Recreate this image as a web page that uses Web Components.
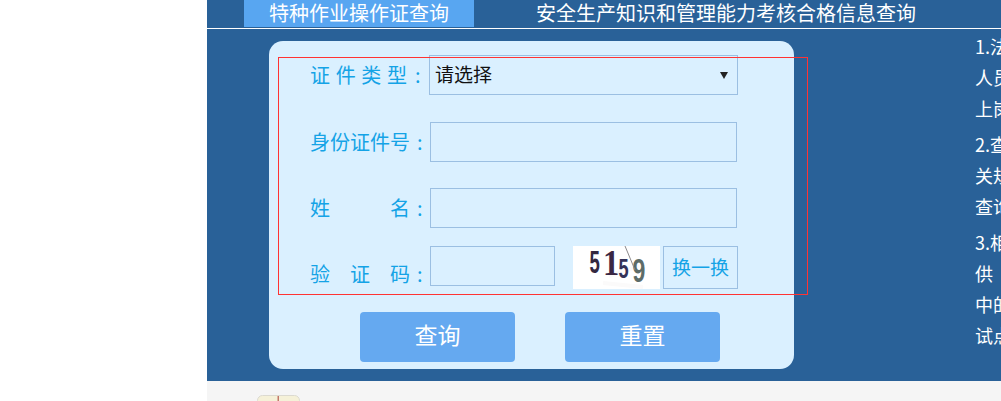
<!DOCTYPE html>
<html lang="zh">
<head>
<meta charset="utf-8">
<title>证书查询</title>
<style>
html,body{margin:0;padding:0;background:#fff;height:401px;overflow:hidden}
body{font-family:"Noto Sans CJK SC","Noto Sans",sans-serif;display:flex;flex-direction:column;padding-left:207px;box-sizing:border-box}
</style>
</head>
<body>
<nav-tabs>
  <tab-item active>特种作业操作证查询</tab-item>
  <tab-item>安全生产知识和管理能力考核合格信息查询</tab-item>
</nav-tabs>
<query-panel>
  <query-form>
    <form-row label="证件类型" label-width="97" colon-gap="8" gap="27"><select-box>请选择</select-box></form-row>
    <form-row label="身份证件号" gap="26"><text-field width="307"></text-field></form-row>
    <form-row label="姓名" gap="18"><text-field width="307"></text-field></form-row>
    <form-row label="验证码" align="end" gap="23">
      <text-field width="125"></text-field>
      <captcha-image></captcha-image>
      <swap-button>换一换</swap-button>
    </form-row>
    <form-actions>
      <action-button>查询</action-button>
      <action-button>重置</action-button>
    </form-actions>
  </query-form>
  <note-column>
    <p>1.法<br>人员<br>上岗</p>
    <p>2.查<br>关规<br>查询</p>
    <p>3.相<br>供<br>中的<br>试点</p>
  </note-column>
</query-panel>
<page-footer><book-icon></book-icon></page-footer>

<script>
function def(name, css, html, extra){
  customElements.define(name, class extends HTMLElement{
    constructor(){
      super();
      this.attachShadow({mode:"open"}).innerHTML = "<style>"+css+"</style>"+(typeof html==="function"?html(this):html);
    }
    connectedCallback(){ if(extra) extra(this); }
  });
}
const FONT='"Noto Sans CJK SC","Noto Sans",sans-serif';

def("nav-tabs",`:host{display:flex;flex:none;height:28px;background:#296198;border-bottom:1px solid #fff;padding-left:37px;align-items:flex-start}`,`<slot></slot>`);

def("tab-item",`:host{display:block;flex:none;height:27px;padding:0 62px;font:20px/25px ${FONT};color:#fff;white-space:nowrap}
:host([active]){width:230px;box-sizing:border-box;padding:0;text-align:center;background:#58a6f1}`,`<slot></slot>`);

def("query-panel",`:host{display:flex;flex:none;height:352px;background:#296198;padding:12px 0 0 62px;box-sizing:border-box;align-items:flex-start}`,`<slot></slot>`);

def("query-form",`:host{display:flex;flex-direction:column;flex:none;position:relative;width:525px;height:328px;box-sizing:border-box;background:#daf0ff;border-radius:14px;padding:14px 0 0 41px;font-family:${FONT}}
.mark{position:absolute;left:9px;top:16px;width:530px;height:238px;box-sizing:border-box;border:1px solid #f33;pointer-events:none}`,
`<slot></slot><div class="mark"></div>`);

def("form-row",`:host{display:grid;grid-template-columns:120px auto;height:40px;flex:none}
.head{display:flex;align-items:flex-start}
.label{display:flex;justify-content:space-between;font-size:20px;line-height:40px;color:#14a3e6;white-space:nowrap}
.colon{font-size:20px;line-height:40px;color:#14a3e6;margin-left:7px}
.wrap{display:flex;align-items:flex-start}
:host([align=end]){height:43px}
:host([align=end]) .label,:host([align=end]) .colon{padding-top:8px}`,
el=>{
  const chars=[...el.getAttribute("label")].map(c=>`<span>${c}</span>`).join("");
  const w=el.getAttribute("label-width")||100;
  const cg=el.getAttribute("colon-gap");
  return `<div class="head"><div class="label" style="width:${w}px">${chars}</div><div class="colon"${cg?` style="margin-left:${cg}px"`:""}>:</div></div><div class="wrap"><slot></slot></div>`;
},
el=>{ el.style.marginBottom=(el.getAttribute("gap")||0)+"px"; });

def("select-box",`:host{display:flex;align-items:flex-start;justify-content:space-between;width:309px;height:40px;box-sizing:border-box;border:1px solid #9bbfe2;margin-left:-1px;padding:0 9px 0 5px;font:19px/36px ${FONT};color:#111}
.arrow{width:0;height:0;margin-top:16px;border:4px solid transparent;border-top:7px solid #222;border-bottom:0}`,
`<span><slot></slot></span><span class="arrow"></span>`);

def("text-field",`:host{display:block;flex:none}
input{display:block;height:40px;box-sizing:border-box;border:1px solid #9bbfe2;background:transparent;padding:0 6px;margin:0;outline:0;border-radius:0;font:18px ${FONT}}`,
el=>`<input type="text" style="width:${el.getAttribute("width")}px">`);

def("captcha-image",`:host{display:block;flex:none;width:87px;height:43px;margin-left:18px;background:#fff}
svg{display:block}`,
`<svg width="87" height="43" viewBox="0 0 87 43" role="img" aria-label="验证码">
<rect width="87" height="43" fill="#fff"/>
<path d="M36 30l30 -10M30 37l40 4" stroke="#fbfafa" stroke-width="4" fill="none"/>
<g font-weight="700">
<text font-family="Liberation Sans" font-size="31" fill="#33283f" transform="translate(16.5 27) scale(.6 1)">5</text>
<text font-family="Liberation Serif" font-size="36" fill="#3a2744" transform="translate(30 29) scale(.9 1)">1</text>
<text font-family="Liberation Sans" font-size="28" fill="#343258" transform="translate(45.5 32) scale(.65 1)">5</text>
<text font-family="Liberation Sans" font-size="34" fill="#5d6c68" transform="translate(59.5 36) scale(.68 1)">9</text>
</g>
<path d="M52 0L62 24" stroke="#8d8a8c" stroke-width="1" fill="none"/>
</svg>`);

def("swap-button",`:host{display:block;flex:none;width:75px;height:43px;margin-left:3px;box-sizing:border-box;border:1px solid #9bbfe2;text-align:center;font:19px/39px ${FONT};color:#14a3e6;white-space:nowrap}`,`<slot></slot>`);

def("form-actions",`:host{display:flex;flex:none;gap:50px;margin-left:50px}`,`<slot></slot>`);

def("action-button",`:host{display:block;flex:none;width:155px;height:50px;background:#65a9f0;border-radius:4px;text-align:center;font:23px/45px ${FONT};color:#fff}`,`<slot></slot>`);

def("note-column",`:host{display:block;flex:none;margin:-10px 0 0 181px;font:18px/31px ${FONT};color:#fff;white-space:nowrap}
::slotted(p){margin:0 0 5px}`,`<slot></slot>`);

def("page-footer",`:host{display:flex;flex:1;min-height:0;background:#f5f5f5;padding:14px 0 0 50px;overflow:hidden;align-items:flex-start}`,`<slot></slot>`);

def("book-icon",`:host{display:block;flex:none;width:43px;height:40px}svg{display:block}`,
`<svg width="43" height="40" viewBox="0 0 43 40"><rect x=".5" y=".5" width="42" height="39" rx="5" fill="#f5f1d8" stroke="#dcdad0"/><rect x="20.5" y="1" width="1.5" height="38" fill="#c2786a"/></svg>`);
</script>
</body>
</html>
